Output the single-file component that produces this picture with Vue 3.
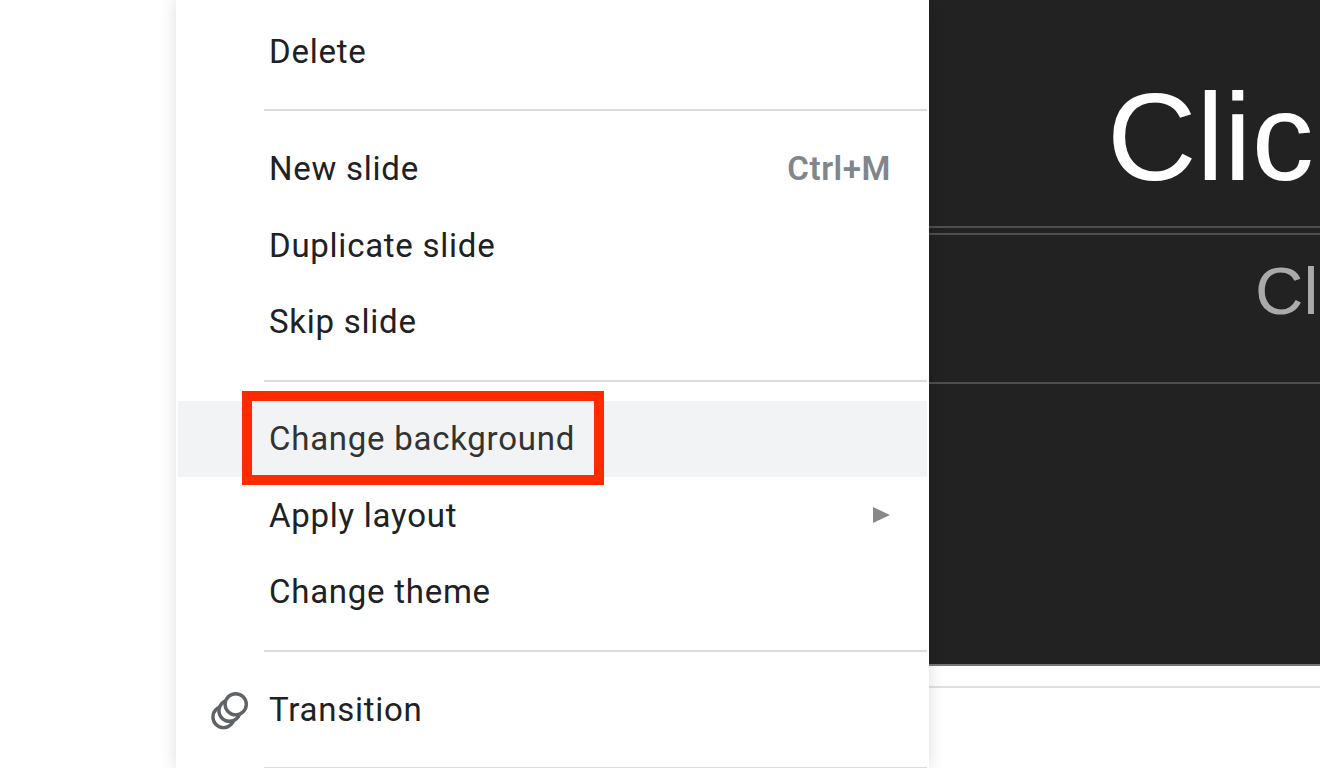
<script setup>
const groups = [
  [{ label: 'Delete' }],
  [
    { label: 'New slide', shortcut: 'Ctrl+M' },
    { label: 'Duplicate slide' },
    { label: 'Skip slide' },
  ],
  [
    { label: 'Change background', active: true },
    { label: 'Apply layout', submenu: true },
    { label: 'Change theme' },
  ],
  [{ label: 'Transition', icon: true }],
];
</script>

<template>
  <div class="page">
    <div class="gutter"></div>
    <div class="menu">
      <div v-for="(group, index) in groups" :key="index" class="group">
        <div v-for="item in group" :key="item.label" class="row" :class="{ active: item.active }">
          <svg v-if="item.icon" class="row-icon" viewBox="0 0 38 38" fill="#fff" stroke="#5f6368" stroke-width="3.4">
            <circle cx="12.5" cy="25" r="10.6" />
            <circle cx="18.5" cy="18.7" r="10.6" />
            <circle cx="24.7" cy="12.3" r="10.6" />
          </svg>
          <span class="label">{{ item.label }}</span>
          <span v-if="item.shortcut" class="shortcut">{{ item.shortcut }}</span>
          <span v-if="item.submenu" class="arrow"></span>
          <div v-if="item.active" class="callout"></div>
        </div>
      </div>
    </div>
    <div class="stage">
      <div class="slide">
        <div class="title-box"><span class="title">Click</span></div>
        <div class="subtitle-box"><span class="subtitle">Click</span></div>
      </div>
      <div class="notes"></div>
    </div>
  </div>
</template>

<style scoped>
.page {
  display: flex;
  width: 1320px;
  height: 768px;
  overflow: hidden;
  background: #fff;
}

.gutter {
  width: 176px;
  flex-shrink: 0;
}

.menu {
  position: relative;
  z-index: 2;
  width: 753px;
  flex-shrink: 0;
  height: 768px;
  padding: 13px 2px 0;
  box-sizing: border-box;
  background: #fff;
  box-shadow: 0 0 16px rgba(0, 0, 0, 0.14);
  font-family: Roboto, "Liberation Sans", sans-serif;
}

.group {
  padding-bottom: 20px;
  margin-bottom: 19px;
  margin-left: 86px;
  border-bottom: 2px solid #dadce0;
}

.row {
  position: relative;
  display: flex;
  align-items: center;
  height: 76.4px;
  margin-left: -86px;
  padding: 0 37px 0 92px;
  font-size: 33px;
  letter-spacing: 0.74px;
  color: #202124;
}

.row.active {
  background: #f1f3f4;
  color: #333;
}

.row-icon {
  position: absolute;
  left: 33px;
  top: 21px;
  width: 38px;
  height: 38px;
}

.label {
  flex: 1;
  padding-top: 0.3px;
  margin-left: -1px;
}

.shortcut {
  padding-bottom: 1px;
  margin-right: -1px;
  font-weight: 600;
  letter-spacing: 0.6px;
  color: #80868b;
}

.arrow {
  width: 0;
  height: 0;
  border-left: 17px solid #888;
  border-top: 8.5px solid transparent;
  border-bottom: 8.5px solid transparent;
}

.callout {
  position: absolute;
  left: 64px;
  top: -10px;
  width: 362px;
  height: 94px;
  box-sizing: border-box;
  border: 10px solid #ff2a00;
}

.stage {
  flex: 1;
  min-width: 0;
}

.slide {
  height: 664px;
  background: #222;
  border-bottom: 2px solid #777;
  overflow: hidden;
  font-family: "Liberation Sans", Arial, sans-serif;
}

.title-box {
  height: 228px;
  box-sizing: border-box;
  border-bottom: 2px solid #4f4f4f;
  margin-bottom: 5px;
  overflow: hidden;
  white-space: nowrap;
  padding-left: 178px;
}

.title {
  display: block;
  font-size: 124px;
  line-height: 144px;
  margin-top: 65px;
  color: #fff;
}

.subtitle-box {
  height: 151px;
  box-sizing: border-box;
  border-top: 2px solid #4f4f4f;
  border-bottom: 2px solid #4f4f4f;
  overflow: hidden;
  white-space: nowrap;
  padding-left: 326px;
}

.subtitle {
  display: block;
  font-size: 67px;
  line-height: 76px;
  margin-top: 18px;
  color: #aaa;
}

.notes {
  height: 20px;
  border-bottom: 2px solid #e0e0e0;
}
</style>

<style>
body {
  background: #fff;
  overflow: hidden;
}
</style>
